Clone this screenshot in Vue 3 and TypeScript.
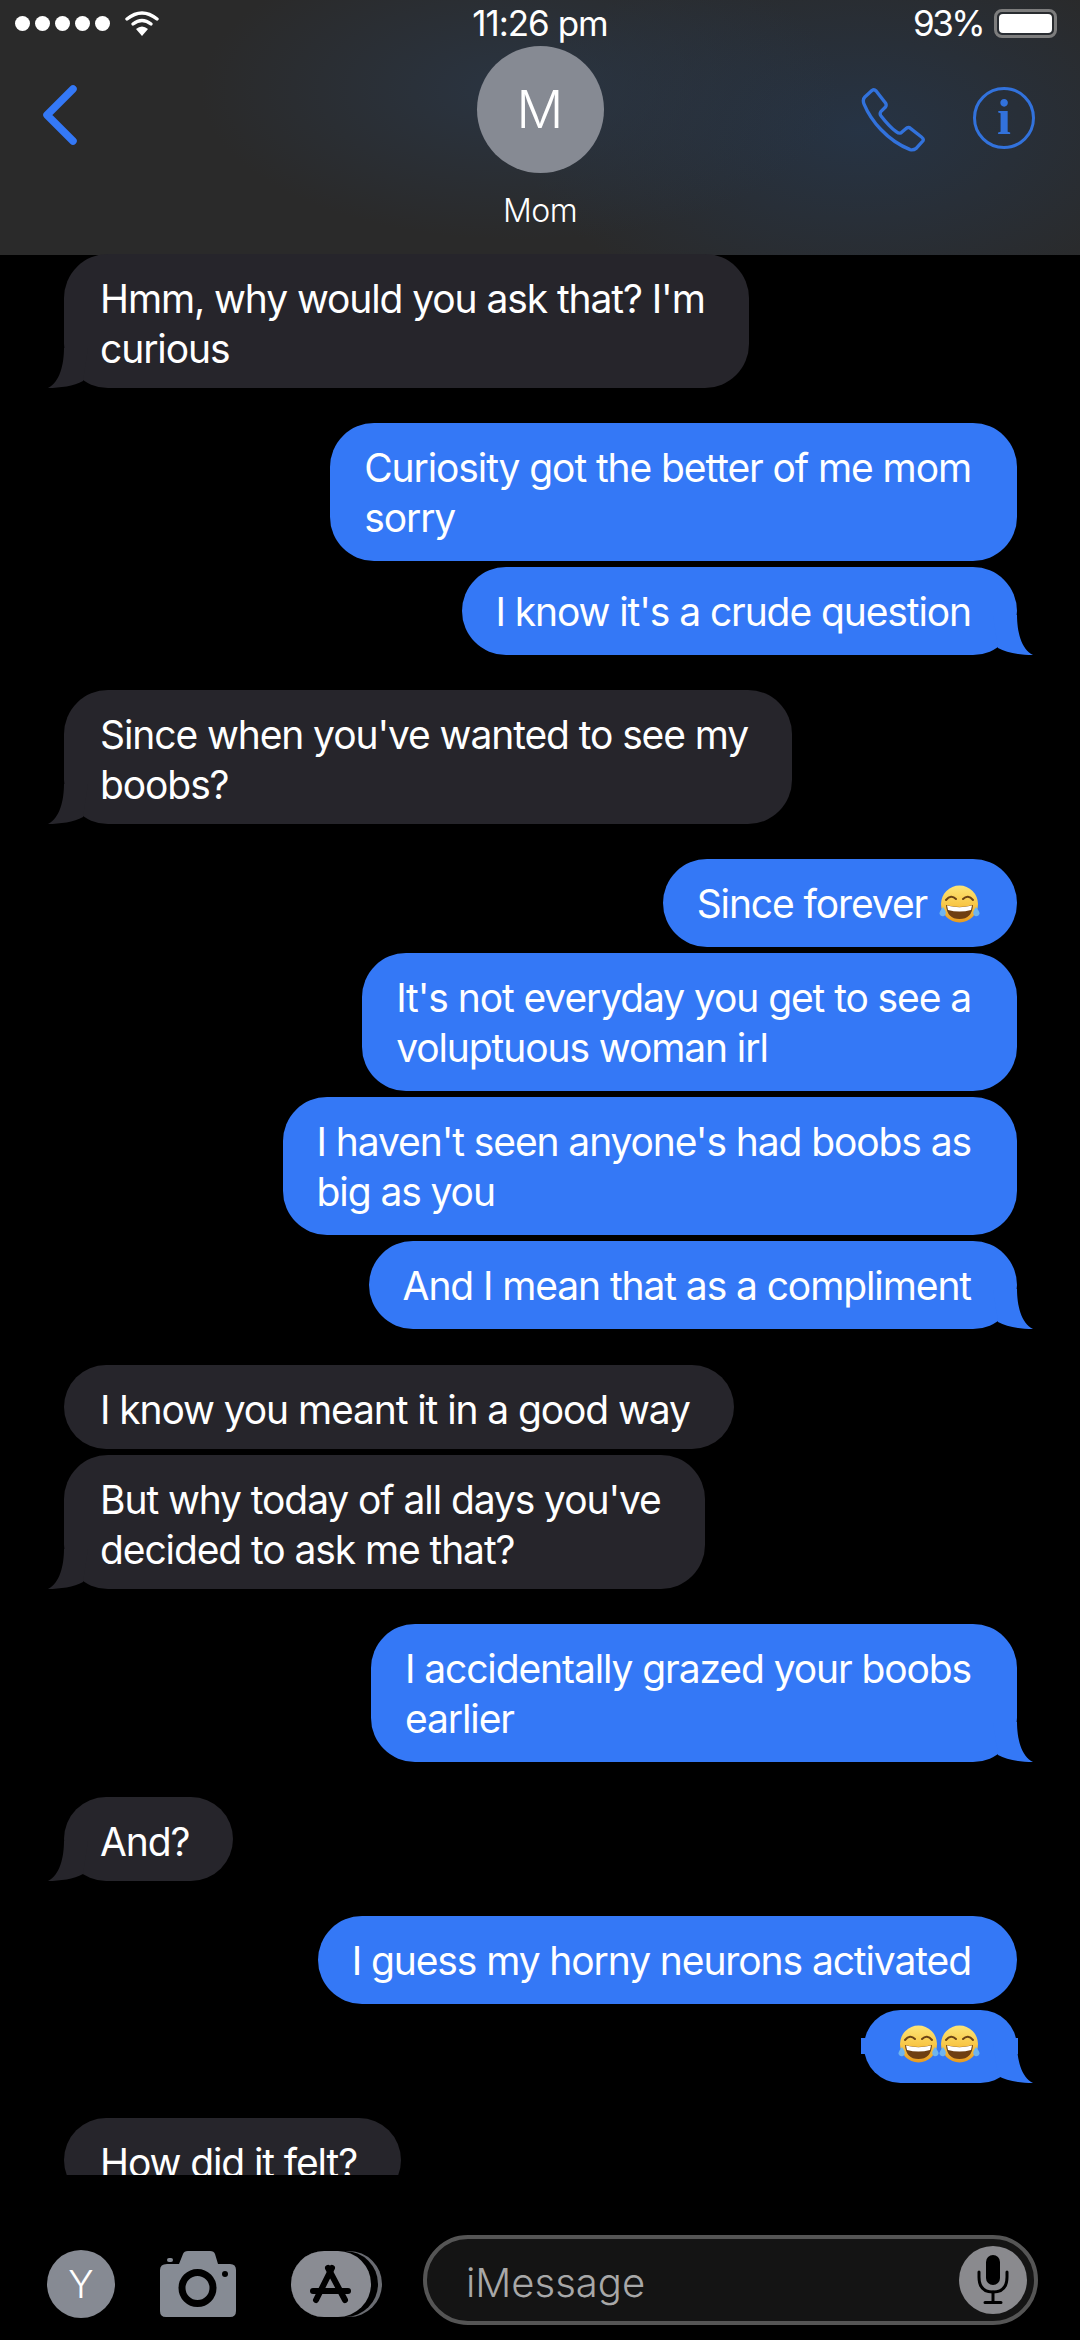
<template>
  <div class="phone">
    <!-- shared emoji drawing -->
    <svg class="defs" width="0" height="0" aria-hidden="true">
      <defs>
        <linearGradient id="joy-face" x1="0" y1="0" x2="0" y2="1">
          <stop offset="0" stop-color="#fde678" />
          <stop offset="0.55" stop-color="#f8c544" />
          <stop offset="1" stop-color="#e79a20" />
        </linearGradient>
        <symbol id="joy" viewBox="0 0 41 38">
          <circle cx="20.5" cy="19" r="18.5" fill="url(#joy-face)" />
          <path d="M7 15 Q12 9 17 14" fill="none" stroke="#6b4315" stroke-width="2" stroke-linecap="round" />
          <path d="M24 14 Q29 9 34 15" fill="none" stroke="#6b4315" stroke-width="2" stroke-linecap="round" />
          <path d="M7 20 Q20.5 24 34 20 Q33 34 20.5 34 Q8 34 7 20 Z" fill="#6e3f12" />
          <path d="M8 20.4 Q20.5 24 33 20.4 L32 25 Q20.5 28 9 25 Z" fill="#fff" />
          <path d="M4 22 Q0 27 0.5 29 Q2 32 5 31 Q8 29 6 25 Z" fill="#6fb5ee" />
          <path d="M37 22 Q41 27 40.5 29 Q39 32 36 31 Q33 29 35 25 Z" fill="#6fb5ee" />
        </symbol>
      </defs>
    </svg>

    <header class="header">
      <div class="status">
        <div class="status-left">
          <span v-for="n in 5" :key="n" class="dot"></span>
          <svg class="wifi" viewBox="0 0 34 26">
            <path d="M2 9 Q17 -3 32 9" fill="none" stroke="#fff" stroke-width="3.4" stroke-linecap="round" />
            <path d="M8 14 Q17 7 26 14" fill="none" stroke="#fff" stroke-width="3.4" stroke-linecap="round" />
            <path d="M11 19 Q17 14 23 19 L17 26 Z" fill="#fff" />
          </svg>
        </div>
        <div class="time">11:26 pm</div>
        <div class="status-right">
          <span class="percent">93%</span>
          <span class="battery"><span class="battery-fill"></span></span>
        </div>
      </div>
      <div class="nav">
        <svg class="back" viewBox="0 0 36 60">
          <path d="M31 4 L5 30 L31 56" fill="none" stroke="#3478f6" stroke-width="7.5" stroke-linecap="round" stroke-linejoin="round" />
        </svg>
        <div class="contact">
          <div class="avatar">M</div>
          <div class="name">Mom</div>
        </div>
        <div class="actions">
          <svg class="phone-icon" viewBox="30 30 200 195">
            <path
              d="M66 40 L44 60 Q36 68 42 82 C62 130 110 190 180 218 Q190 220 198 214 L218 192 Q222 186 214 180 L178 152 Q172 150 166 156 L152 168 Q146 170 138 164 C122 152 106 134 92 116 Q88 110 92 104 L106 90 Q110 84 106 78 L78 42 Q72 36 66 40 Z"
              fill="none" stroke="#3272dc" stroke-width="10" stroke-linejoin="round" />
          </svg>
          <div class="info">i</div>
        </div>
      </div>
    </header>

    <main class="thread">
      <div v-for="(m, i) in messages" :key="i" class="row" :class="[m.from, m.gap]">
        <div class="bubble" :class="{ 'emoji-only': m.lines.length === 0, tall: m.emoji && m.lines.length }">
          <div v-for="(line, j) in m.lines" :key="j" class="line">
            {{ line }}<svg v-if="m.emoji" class="emoji inline" viewBox="0 0 41 38"><use href="#joy" /></svg>
          </div>
          <template v-if="m.lines.length === 0">
            <svg v-for="n in m.emoji" :key="n" class="emoji" viewBox="0 0 41 38"><use href="#joy" /></svg>
          </template>
          <svg v-if="m.tail" class="tail" viewBox="0 0 40 40">
            <path d="M24 0 C24 16 28 34 40 40 C28 40 14 38 5 33 L0 0 Z" fill="currentColor" />
          </svg>
        </div>
      </div>
    </main>

    <footer class="composer">
      <div class="tools">
        <div class="user">Y</div>
        <svg class="camera" viewBox="0 0 76 66">
          <path d="M7 13 H19 L23 3 Q24 0 28 0 H50 Q54 0 55 3 L58 13 H70 Q76 13 76 19 V60 Q76 66 70 66 H6 Q0 66 0 60 V19 Q0 13 7 13 Z" fill="#868b94" />
          <rect x="7" y="7" width="6" height="4" rx="2" fill="#868b94" />
          <circle cx="37.5" cy="37" r="15.5" fill="none" stroke="#000" stroke-width="7" />
          <circle cx="65" cy="23" r="3" fill="#000" />
        </svg>
        <svg class="apps" viewBox="0 0 91 66">
          <rect width="91" height="66" rx="33" fill="#6a6c72" />
          <rect width="87" height="66" rx="33" fill="#000" />
          <rect width="80" height="66" rx="33" fill="#8a8c93" />
          <g fill="none" stroke="#000" stroke-width="6" stroke-linecap="round">
            <path d="M41 17 L25 49" />
            <path d="M37 17 L54 49" />
            <path d="M22 40 H57" />
          </g>
        </svg>
      </div>
      <div class="input">
        <span class="placeholder">iMessage</span>
        <div class="mic">
          <svg viewBox="0 0 34 50" width="34" height="50">
            <rect x="10" y="0" width="14" height="30" rx="7" fill="#000" />
            <path d="M3 17 V22 Q3 37 17 37 Q31 37 31 22 V17" fill="none" stroke="#000" stroke-width="3" stroke-linecap="round" />
            <path d="M17 37 V47 M9 47.5 H25" fill="none" stroke="#000" stroke-width="3" stroke-linecap="round" />
          </svg>
        </div>
      </div>
    </footer>
  </div>
</template>

<script setup lang="ts">
interface Message {
  from: 'me' | 'them'
  lines: string[]
  tail?: boolean
  gap?: string
  emoji?: number
}

const messages: Message[] = [
  { from: 'them', lines: ["Hmm, why would you ask that? I'm", 'curious'], tail: true },
  { from: 'me', lines: ['Curiosity got the better of me mom', 'sorry'], gap: 'group' },
  { from: 'me', lines: ["I know it's a crude question"], tail: true },
  { from: 'them', lines: ["Since when you've wanted to see my", 'boobs?'], tail: true, gap: 'group' },
  { from: 'me', lines: ['Since forever '], emoji: 1, gap: 'group' },
  { from: 'me', lines: ["It's not everyday you get to see a", 'voluptuous woman irl'] },
  { from: 'me', lines: ["I haven't seen anyone's had boobs as", 'big as you'] },
  { from: 'me', lines: ['And I mean that as a compliment'], tail: true },
  { from: 'them', lines: ['I know you meant it in a good way'], gap: 'group-wide' },
  { from: 'them', lines: ["But why today of all days you've", 'decided to ask me that?'], tail: true },
  { from: 'me', lines: ['I accidentally grazed your boobs', 'earlier'], tail: true, gap: 'group' },
  { from: 'them', lines: ['And?'], tail: true, gap: 'group' },
  { from: 'me', lines: ['I guess my horny neurons activated'], gap: 'group' },
  { from: 'me', lines: [], emoji: 2, tail: true },
  { from: 'them', lines: ['How did it felt?'], gap: 'group' },
]
</script>

<style>
html,
body {
  margin: 0;
  background: #000;
}
</style>

<style scoped>
.phone {
  width: 1080px;
  height: 2340px;
  background: #000;
  color: #fff;
  font-family: Inter, "Noto Sans", sans-serif;
  overflow: hidden;
}

.defs {
  position: absolute;
}

/* header */
.header {
  height: 255px;
  box-sizing: border-box;
  background:
    radial-gradient(ellipse 320px 150px at 520px 90px, rgba(42, 56, 74, 0.75), rgba(42, 56, 74, 0)),
    radial-gradient(ellipse 340px 190px at 860px 130px, rgba(38, 52, 70, 0.95), rgba(38, 52, 70, 0)),
    #2a2a2a;
}

.status {
  height: 46px;
  display: grid;
  grid-template-columns: 1fr auto 1fr;
  align-items: center;
  padding: 0 15px;
  font-size: 35px;
  letter-spacing: -1px;
  line-height: 46px;
}

.status-left {
  display: flex;
  align-items: center;
  gap: 5px;
}

.dot {
  width: 15px;
  height: 15px;
  border-radius: 50%;
  background: #fff;
}

.wifi {
  width: 34px;
  height: 26px;
  margin-left: 10px;
}

.status-right {
  display: flex;
  justify-content: flex-end;
  align-items: center;
  gap: 11px;
  padding-right: 8px;
}

.percent {
  letter-spacing: -2.6px;
}

.battery {
  width: 63px;
  height: 29px;
  box-sizing: border-box;
  border: 3px solid #7d7d7d;
  border-radius: 8px;
  padding: 2px;
  display: flex;
}

.battery-fill {
  flex: 1;
  background: #fff;
  border-radius: 4px;
}

.nav {
  display: grid;
  grid-template-columns: 1fr auto 1fr;
  padding: 0 45px;
}

.back {
  width: 36px;
  height: 60px;
  margin: 39px 0 0 -3px;
}

.contact {
  display: flex;
  flex-direction: column;
  align-items: center;
}

.avatar {
  width: 127px;
  height: 127px;
  border-radius: 50%;
  background: #868a93;
  font-size: 52px;
  font-weight: 300;
  line-height: 127px;
  text-align: center;
}

.name {
  margin-top: 18px;
  font-size: 32px;
  font-weight: 300;
  letter-spacing: -0.5px;
  line-height: 40px;
}

.actions {
  display: flex;
  justify-content: flex-end;
  gap: 46px;
  margin-top: 41px;
  height: 65px;
}

.phone-icon {
  width: 67px;
  height: 65px;
}

.info {
  width: 62px;
  height: 62px;
  box-sizing: border-box;
  border: 3px solid #3272dc;
  border-radius: 50%;
  color: #3272dc;
  font-family: "Liberation Serif", serif;
  font-weight: 700;
  font-size: 50px;
  line-height: 54px;
  text-align: center;
}

/* messages */
.thread {
  height: 1921px;
  overflow: hidden;
  margin-top: -1px;
  position: relative;
}

.row {
  display: flex;
  margin-top: 6px;
  padding: 0 63px 0 64px;
}

.row:first-child {
  margin-top: 0;
}

.row.group {
  margin-top: 35px;
}

.row.group-wide {
  margin-top: 36px;
}

.row.me {
  justify-content: flex-end;
}

.bubble {
  position: relative;
  font-size: 39px;
  letter-spacing: -1.1px;
  line-height: 50px;
  border-radius: 44px;
}

.me .bubble {
  background: #3478f6;
  color: #fff;
  padding: 20px 46px 18px 34px;
}

.them .bubble {
  background: #26252b;
  padding: 20px 44px 14px 36px;
}

.me .bubble.tall {
  padding: 20px 37px 18px 34px;
}

.line {
  white-space: pre;
  display: flex;
  align-items: center;
}

.emoji {
  width: 41px;
  height: 38px;
  display: block;
}

.emoji.inline {
  margin-left: 2px;
}

.me .bubble.emoji-only {
  display: flex;
  align-items: center;
  padding: 15px 37px 20px 34px;
}

.emoji-only::before,
.emoji-only::after {
  content: "";
  position: absolute;
  top: 28px;
  width: 6px;
  height: 16px;
  background: #3478f6;
}

.emoji-only::before {
  left: -3px;
}

.emoji-only::after {
  right: -1px;
}

.tail {
  position: absolute;
  bottom: 0;
  width: 40px;
  height: 40px;
}

.me .tail {
  right: -16px;
  color: #3478f6;
}

.them .tail {
  left: -16px;
  color: #26252b;
  transform: scaleX(-1);
}

/* composer */
.composer {
  display: flex;
  align-items: flex-start;
  padding: 60px 42px 0 47px;
}

.tools {
  display: flex;
  align-items: center;
  height: 90px;
  padding-top: 7px;
  box-sizing: border-box;
}

.user {
  width: 68px;
  height: 68px;
  border-radius: 50%;
  background: #868a93;
  font-size: 38px;
  font-weight: 300;
  line-height: 68px;
  text-align: center;
}

.camera {
  width: 76px;
  height: 66px;
  margin-left: 45px;
}

.apps {
  width: 91px;
  height: 66px;
  margin-left: 55px;
}

.input {
  width: 615px;
  height: 90px;
  box-sizing: border-box;
  margin-left: 41px;
  border: 4px solid #555;
  border-radius: 45px;
  background: #141414;
  display: flex;
  align-items: center;
  justify-content: space-between;
  padding: 0 7px 0 39px;
}

.placeholder {
  color: #a8a8a8;
  font-size: 40px;
  font-weight: 300;
  padding-top: 4px;
}

.mic {
  width: 68px;
  height: 68px;
  border-radius: 50%;
  background: #8a8a8e;
  display: flex;
  align-items: center;
  justify-content: center;
}
</style>
